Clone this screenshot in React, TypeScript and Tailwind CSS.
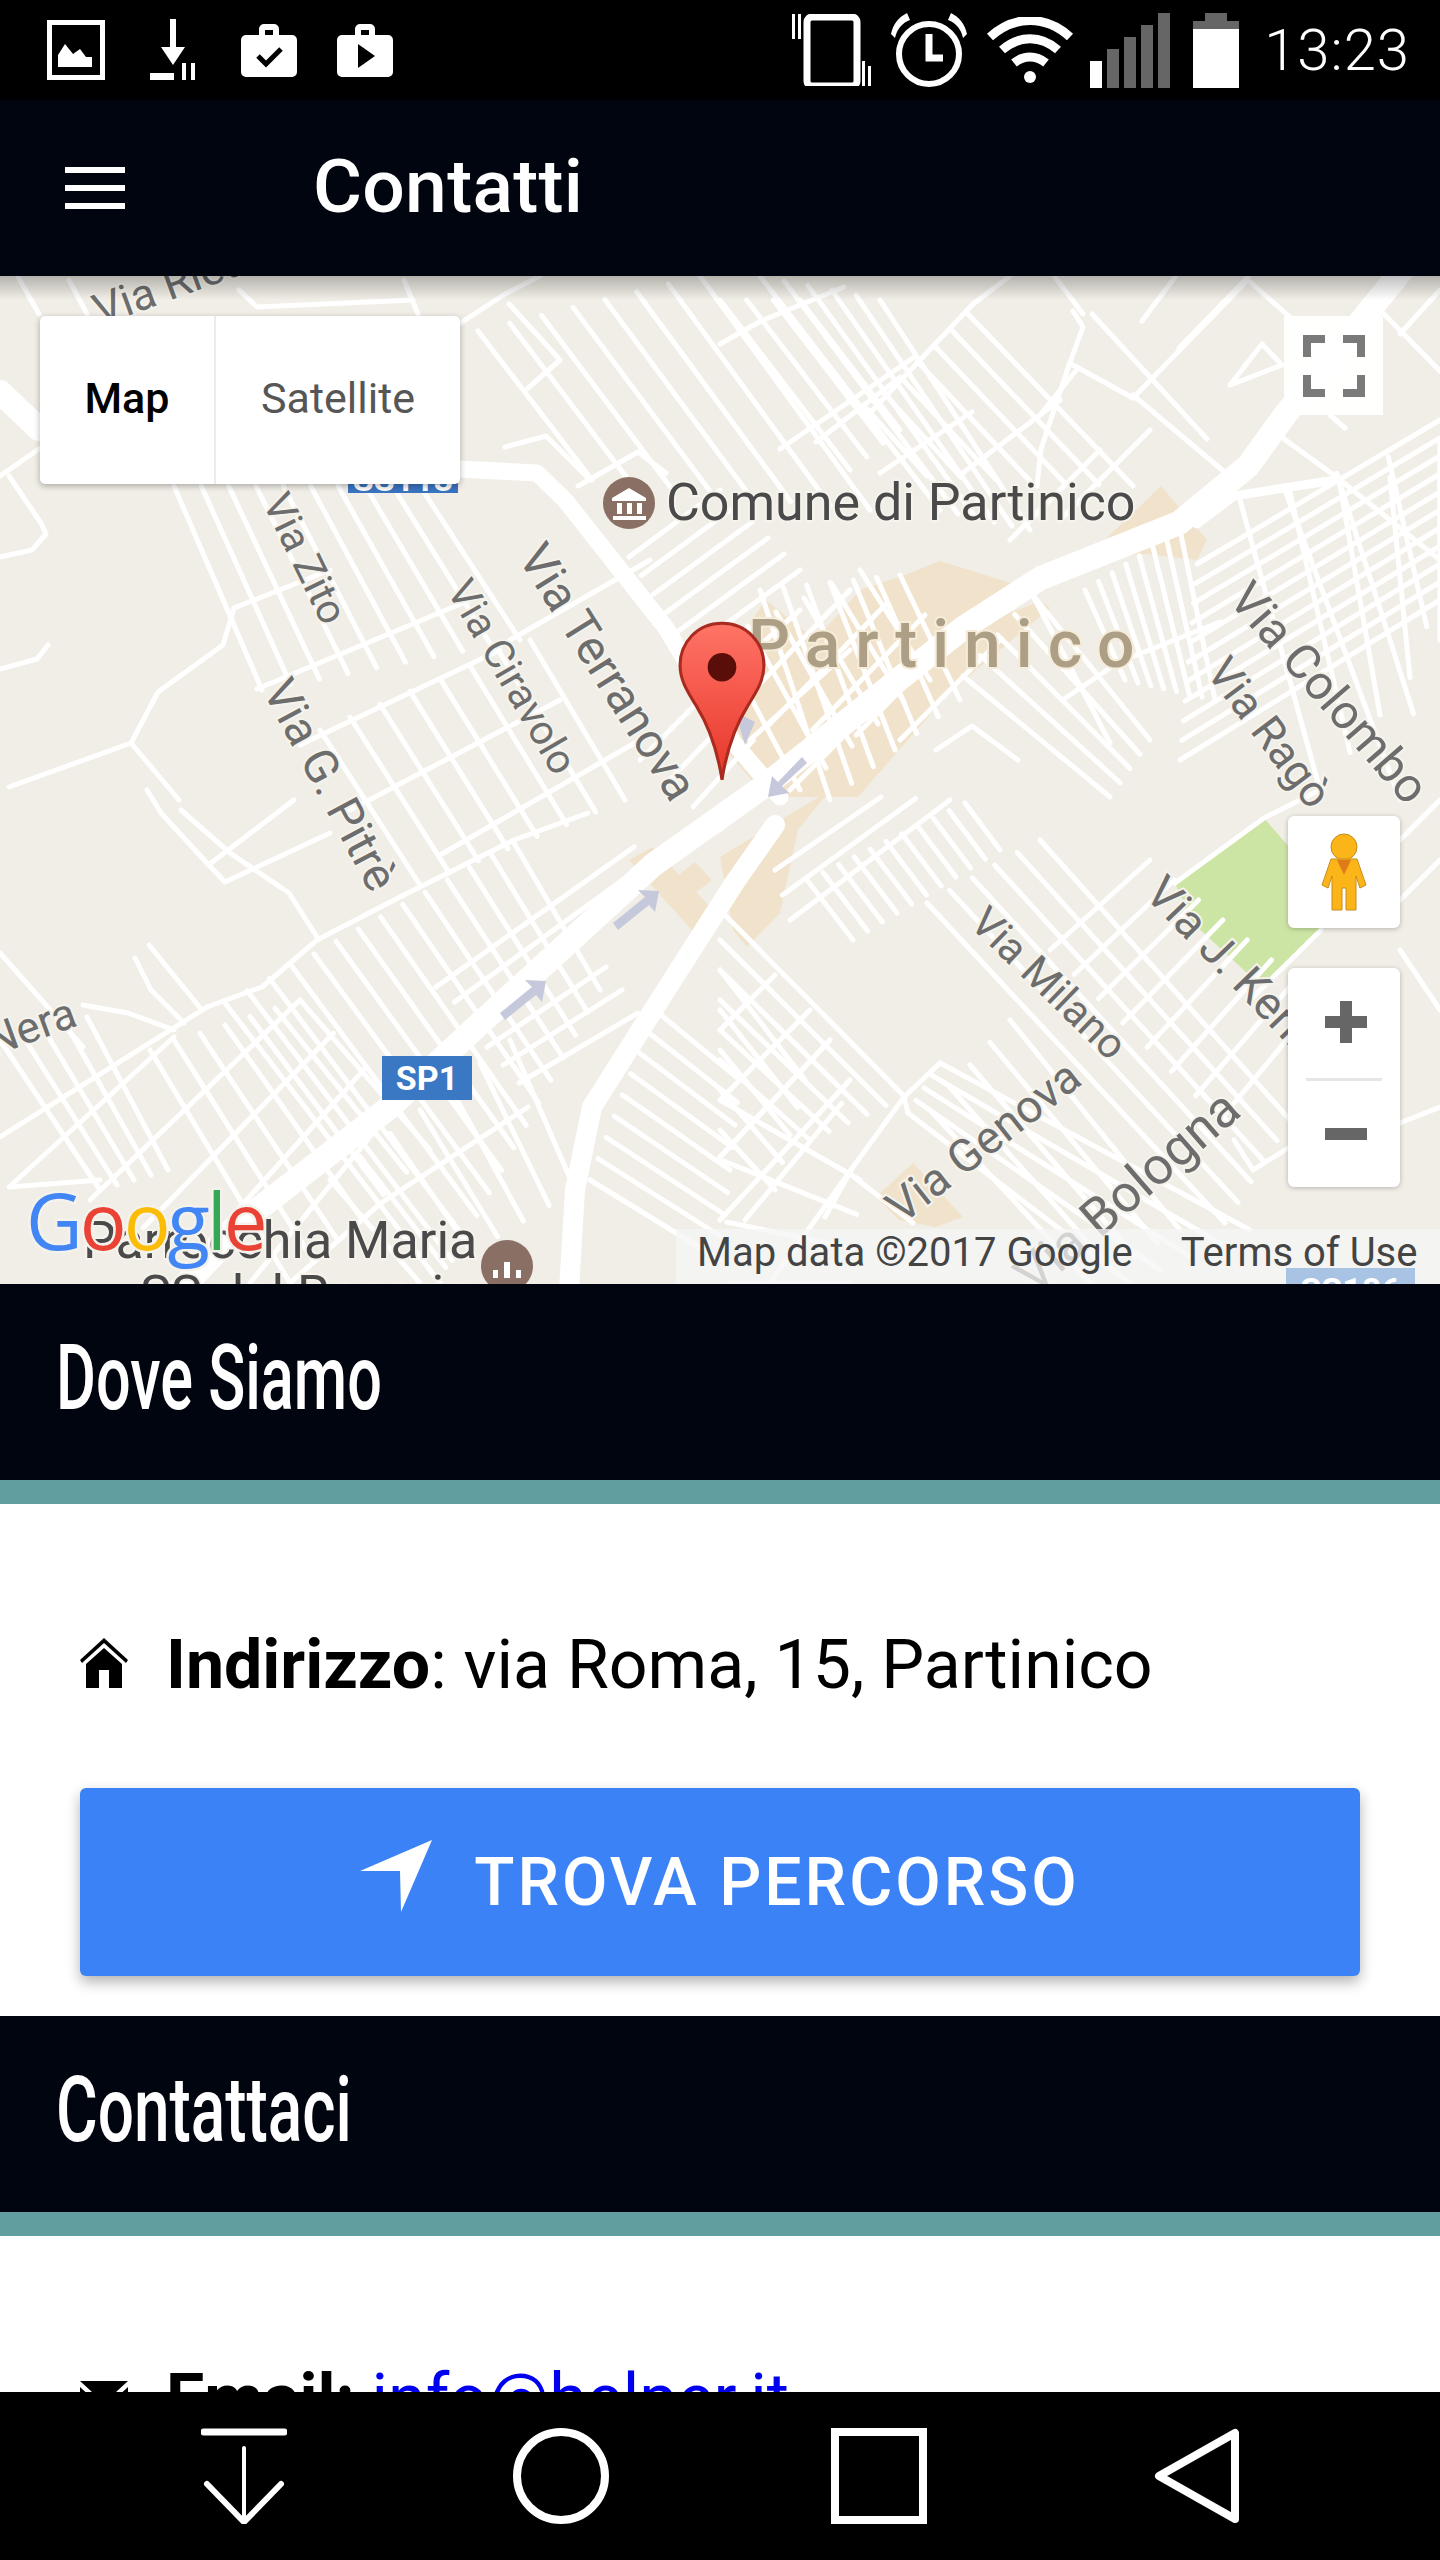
type Pt = [number, number];
type Seg = [number, number, number, number];

// n streets fanned between the edge a-b and the edge c-d
const span = (a: Pt, b: Pt, c: Pt, d: Pt, n: number): Seg[] =>
  Array.from({ length: n }, (_, i) => {
    const t = n === 1 ? 0 : i / (n - 1);
    return [a[0] + (b[0] - a[0]) * t, a[1] + (b[1] - a[1]) * t, c[0] + (d[0] - c[0]) * t, c[1] + (d[1] - c[1]) * t] as Seg;
  });

const blocks: Seg[] = [
  // under the map type control
  ...span([174, 486], [420, 486], [262, 690], [520, 640], 10),
  ...span([320, 730], [530, 640], [420, 885], [625, 800], 8),
  // right of the control
  ...span([478, 331], [700, 276], [592, 480], [870, 510], 8),
  // comune, going up right
  ...span([629, 557], [690, 650], [720, 490], [800, 570], 6),
  ...span([640, 760], [720, 830], [720, 680], [770, 770], 4),
  // top centre
  ...span([720, 300], [800, 300], [850, 470], [900, 430], 4),
  ...span([760, 276], [880, 300], [940, 510], [1030, 530], 6),
  ...span([867, 409], [968, 314], [927, 476], [1133, 486], 7),
  // top right fan
  ...span([1085, 590], [1180, 530], [1125, 680], [1215, 700], 8),
  ...span([1197, 564], [1180, 760], [1440, 420], [1440, 600], 11),
  ...span([1285, 490], [1440, 440], [1400, 800], [1440, 540], 4),
  ...span([1240, 500], [1440, 470], [1320, 790], [1440, 640], 5),
  // partinico grid
  ...span([720, 640], [860, 570], [800, 790], [930, 680], 6),
  ...span([725, 720], [900, 740], [850, 590], [1000, 640], 5),
  ...span([760, 590], [900, 575], [830, 800], [960, 700], 7),
  ...span([963, 676], [1032, 594], [1110, 797], [1150, 740], 5),
  // below the main road, centre
  ...span([807, 880], [965, 803], [853, 940], [1000, 850], 11),
  ...span([775, 870], [790, 920], [881, 797], [950, 800], 3),
  ...span([720, 970], [720, 1130], [805, 1080], [775, 1190], 5),
  ...span([720, 910], [720, 1060], [905, 1097], [810, 1140], 6),
  ...span([927, 903], [1040, 840], [1225, 1223], [1290, 1120], 6),
  ...span([1050, 950], [1220, 1120], [1150, 860], [1320, 1000], 8),
  ...span([908, 1113], [940, 1063], [1130, 1283], [1250, 1230], 5),
  ...span([930, 1110], [1010, 1020], [1090, 1283], [1180, 1230], 5),
  ...span([720, 1157], [770, 1283], [830, 1040], [853, 1167], 3),
  // left of road two
  ...span([655, 1010], [590, 1180], [740, 1080], [720, 1260], 9),
  ...span([720, 1100], [730, 1283], [860, 1180], [850, 1283], 4),
  ...span([487, 1047], [519, 1083], [606, 967], [638, 1013], 3),
  ...span([436, 987], [473, 1017], [634, 847], [615, 910], 3),
  // boundary road down to the main road and past it
  ...span([225, 1003], [514, 843], [440, 1283], [600, 990], 14),
  ...span([150, 1050], [300, 1000], [290, 1283], [430, 1150], 7),
  ...span([90, 1200], [250, 1283], [300, 1000], [400, 1100], 4),
  ...span([330, 1180], [510, 1040], [420, 1283], [575, 1190], 7),
  // bottom left corner
  ...span([0, 1040], [87, 1017], [100, 1190], [168, 1170], 5),
];

const single: number[][] = [
  // thin roads through the empty part
  [234, 608, 223, 645, 158, 692, 131, 743, 9, 787],
  [131, 743, 179, 800],
  [48, 645, 37, 659, 0, 669],
  [39, 449, 0, 476],
  [9, 476, 41, 523, 46, 534, 32, 550, 0, 557],
  [234, 608, 330, 570],
  [257, 689, 470, 600],
  [300, 745, 500, 650],
  [350, 810, 560, 700],
  [440, 855, 640, 740],
  [510, 640, 650, 560],
  [147, 790, 161, 813, 207, 863, 225, 882, 330, 833],
  [181, 810, 230, 853, 289, 893, 317, 937],
  [294, 800, 211, 863],
  [149, 945, 202, 1010],
  [135, 958, 151, 990, 184, 1023],
  [0, 953, 83, 1047],
  [83, 1005, 128, 1013, 174, 1030],
  [207, 1007, 262, 987, 317, 940, 400, 897, 514, 840, 588, 813],
  [207, 1007, 0, 1137],
  [174, 1037, 9, 1187],
  [100, 1180, 10, 1187],
  // above the controls
  [18, 277, 39, 314],
  [69, 280, 87, 314],
  [239, 290, 257, 307, 413, 300],
  [404, 280, 418, 314],
  // round the comune
  [459, 324, 505, 294, 540, 276],
  [528, 388, 560, 360, 509, 304],
  [505, 447, 546, 436, 590, 480],
  [578, 486, 638, 452, 666, 473],
  // top right
  [720, 344, 761, 321, 844, 287],
  [868, 415, 973, 304, 1010, 276],
  [780, 449, 913, 358],
  [816, 442, 899, 378],
  [880, 473, 972, 412],
  [1040, 415, 1078, 368],
  [960, 475, 1060, 400],
  [1010, 540, 1100, 450],
  [1060, 520, 1150, 430],
  [1073, 311, 1083, 327, 1069, 365, 1041, 449, 1037, 486],
  [1133, 398, 1248, 280],
  [1142, 321, 1175, 277],
  [1179, 348, 1248, 277],
  [1092, 314, 1207, 439],
  [1133, 395, 1234, 480],
  [1073, 365, 1133, 398],
  [1055, 277, 1083, 314],
  [1248, 280, 1344, 365],
  [1330, 415, 1345, 428],
  [1262, 344, 1282, 365, 1230, 385, 1262, 344],
  [1381, 311, 1440, 371],
  [1400, 334, 1440, 290],
  [1280, 436, 1335, 476, 1440, 560],
  // centre bits
  [720, 680, 800, 610],
  [750, 740, 850, 650],
  [790, 790, 940, 640],
  [1064, 699, 1119, 662, 1220, 622],
  [936, 750, 972, 726, 1018, 760],
  [1032, 594, 1110, 743],
  [1234, 1140, 1253, 1170, 1317, 1130],
  [904, 1097, 853, 1167, 825, 1217],
  [940, 1063, 904, 1097, 908, 1113],
  [849, 1173, 913, 1223],
  [528, 1107, 381, 1203, 290, 1283],
  [720, 1157, 830, 1040],
  [720, 1100, 810, 1010],
  [720, 1030, 775, 975],
  [720, 1220, 850, 1080],
  // around the park and the zoom control
  [1175, 883, 1264, 818, 1320, 790],
  [1400, 840, 1440, 800],
  [1400, 900, 1440, 860],
  [1400, 950, 1440, 1010],
  [1321, 930, 1250, 1000],
  [1400, 1123, 1440, 1107],
];

const Marker = () => (
  <svg viewBox="0 0 88 160" className="absolute left-[677px] top-[344px] h-[164px] w-[90px]">
    <defs>
      <linearGradient id="pin" x1="0" y1="0" x2="0" y2="1">
        <stop offset="0" stopColor="#ff7466" />
        <stop offset="1" stopColor="#e8352a" />
      </linearGradient>
    </defs>
    <path d="M44 3C20 3 3 22 3 44c0 14 6 24 16 40 10 16 20 40 25 72 5-32 15-56 25-72 10-16 16-26 16-40C85 22 68 3 44 3Z" fill="url(#pin)" stroke="#a92b20" strokeWidth="3" />
    <circle cx="44" cy="46" r="14" fill="#5a0e0a" />
  </svg>
);

const MapLabel = ({ x, y, r = 0, children, size = 44 }: { x: number; y: number; r?: number; children: string; size?: number }) => (
  <text
    x={x}
    y={y}
    fontSize={size}
    transform={`rotate(${r} ${x} ${y})`}
    fill="#6d6d6d"
    stroke="#f5f3ec"
    strokeWidth="4"
    paintOrder="stroke"
  >
    {children}
  </text>
);

const GoogleMap = () => (
  <div className="relative h-[1008px] overflow-hidden bg-[#f0eee6]">
    <svg viewBox="0 276 1440 1008" className="h-full w-full">
      <g fill="#f1e3cb">
        <polygon points="730,650 766,600 815,640 860,590 905,575 940,561 1014,584 977,625 1041,601 1050,608 950,692 858,797 766,797 720,743" />
        <polygon points="1087,557 1161,486 1207,540 1197,560 1147,554" />
        <polygon points="720,857 830,790 798,830 780,913 747,947 733,930" />
        <polygon points="629,860 652,847 716,913 698,937" />
        <polygon points="666,885 695,862 712,880 680,905" />
        <polygon points="876,1197 913,1163 963,1217 936,1227 899,1220" />
      </g>
      <polygon points="1175,883 1264,818 1289,847 1321,930 1262,987 1193,923" fill="#cde5a4" />
      <g stroke="#ffffff" strokeWidth="5" fill="none" strokeLinecap="round" strokeLinejoin="round">
        {blocks.map((s, i) => (
          <line key={i} x1={s[0]} y1={s[1]} x2={s[2]} y2={s[3]} />
        ))}
        {single.map((p, i) => (
          <polyline key={i} points={p.join(" ")} />
        ))}
      </g>
      <g stroke="#ffffff" fill="none" strokeLinecap="round" strokeLinejoin="round">
        <polyline strokeWidth="24" points="180,1290 257,1210 390,1107 474,1029 653,865 767,784 848,720 963,628 1041,578 1179,523 1248,466 1285,415 1386,290 1410,260" />
        <polyline strokeWidth="20" points="569,1290 575,1190 592,1107 666,990 735,882 775,825" />
        <polyline strokeWidth="17" points="459,469 537,473 565,500 666,628 734,743 780,797" />
        <polyline strokeWidth="24" points="0,392 39,429" />
        <polyline strokeWidth="9" points="1197,524 1234,496 1335,480" />
      </g>
      <g fill="#c6c9dc">
        <polygon points="500,1013 532,987 525,980 546,981 542,1002 536,995 505,1020" />
        <polygon points="613,923 645,897 638,890 659,891 655,912 649,905 618,930" />
        <polygon points="807,763 782,786 789,793 768,797 772,776 778,782 802,757" />
        <polygon points="735,712 755,722 745,745" />
      </g>

      <MapLabel x={100} y={326} r={-20}>Via Rieti</MapLabel>
      <MapLabel x={262} y={502} r={64} size={41}>Via Zito</MapLabel>
      <MapLabel x={262} y={690} r={62} size={47}>Via G. Pitrè</MapLabel>
      <MapLabel x={446} y={590} r={60} size={41}>Via Ciravolo</MapLabel>
      <MapLabel x={517} y={557} r={58} size={48}>Via Terranova</MapLabel>
      <MapLabel x={-77} y={1082} r={-20}>Via Nera</MapLabel>
      <MapLabel x={1227} y={600} r={49} size={48}>Via Colombo</MapLabel>
      <MapLabel x={1205} y={672} r={53} size={44}>Via Ragò</MapLabel>
      <MapLabel x={1143} y={895} r={46} size={46}>Via J. Kennedy</MapLabel>
      <MapLabel x={968} y={925} r={44} size={42}>Via Milano</MapLabel>
      <MapLabel x={902} y={1225} r={-38} size={46}>Via Genova</MapLabel>
      <MapLabel x={1034} y={1296} r={-41} size={52}>Via Bologna</MapLabel>

      <text x={666} y={520} fontSize="52" fill="#4a4a4a" stroke="#f5f3ec" strokeWidth="4" paintOrder="stroke">Comune di Partinico</text>
      <circle cx={629} cy={503} r={26} fill="#8a6f64" />
      <path d="M612 498l17-10 17 10v3h-34zM617 503h5v11h-5zM627 503h5v11h-5zM637 503h5v11h-5zM613 516h33v4h-33z" fill="#fff" />

      <text x={748} y={667} fontSize="66" fontWeight="500" letterSpacing="15" fill="#ad9f85" stroke="#f5ecd9" strokeWidth="4" paintOrder="stroke">Partinico</text>

      <rect x={348} y={470} width={110} height={23} fill="#3a74c0" />
      <text x={403} y={491} fontSize="34" fontWeight="700" fill="#fff" textAnchor="middle">SS113</text>
      <rect x={382} y={1056} width={90} height={44} fill="#3b78c4" />
      <text x={427} y={1090} fontSize="34" fontWeight="700" fill="#fff" textAnchor="middle">SP1</text>

      <text x={83} y={1258} fontSize="52" fill="#4a4a4a" stroke="#f5f3ec" strokeWidth="4" paintOrder="stroke">Parrocchia Maria</text>
      <text x={140} y={1312} fontSize="52" fill="#4a4a4a" stroke="#f5f3ec" strokeWidth="4" paintOrder="stroke">SS del Rosario</text>
      <circle cx={507} cy={1266} r={26} fill="#8a6f64" />
      <path d="M504 1262h6v16h-6zM493 1270h5v8h-5zM516 1270h5v8h-5z" fill="#fff" />

      {/* logo as coloured letters */}
      <text x={26} y={1250} fontSize="78" fontWeight="500" letterSpacing="-3" stroke="#f4f2ec" strokeWidth="5" paintOrder="stroke" fontFamily="'Open Sans',sans-serif">
        <tspan fill="#4285f4">G</tspan>
        <tspan fill="#ea4335">o</tspan>
        <tspan fill="#fbbc05">o</tspan>
        <tspan fill="#4285f4">g</tspan>
        <tspan fill="#34a853">l</tspan>
        <tspan fill="#ea4335">e</tspan>
      </text>
    </svg>

    <div className="absolute inset-x-0 top-0 h-6 bg-gradient-to-b from-black/25 to-transparent" />

    <Marker />

    {/* map type */}
    <div className="absolute left-10 top-10 flex h-[168px] w-[420px] rounded-[5px] bg-white text-[43px] shadow-[0_2px_6px_rgba(0,0,0,0.3)]">
      <div className="flex w-[176px] items-center justify-center border-r-2 border-[#ececec] pb-1 font-medium text-black">Map</div>
      <div className="flex flex-1 items-center justify-center pb-1 text-[#565656]">Satellite</div>
    </div>

    {/* fullscreen */}
    <div className="absolute left-[1284px] top-10 flex size-[99px] items-center justify-center bg-white/95">
      <svg viewBox="0 0 62 62" className="size-[62px]" fill="none" stroke="#7a7a7a" strokeWidth="8">
        <path d="M4 22V4h18M40 4h18v18M4 40v18h18M58 40v18H40" />
      </svg>
    </div>

    {/* pegman */}
    <div className="absolute left-[1288px] top-[540px] flex h-[112px] w-[112px] items-center justify-center rounded-[6px] bg-white shadow-[0_1px_5px_rgba(0,0,0,0.25)]">
      <svg viewBox="0 0 46 78" className="h-[78px] w-[46px]">
        <circle cx="23" cy="14" r="13" fill="#fbb519" stroke="#c98a1a" strokeWidth="1" />
        <path d="M10 26h26l9 26-6 3-4-12v34H25V55h-4v22H11V43L7 55l-6-3Z" fill="#fbb519" stroke="#c98a1a" strokeWidth="1" />
        <path d="M16 27h14l-7 15Z" fill="#e07b1a" />
      </svg>
    </div>

    {/* zoom */}
    <div className="absolute left-[1288px] top-[692px] flex h-[219px] w-[112px] flex-col items-center rounded-[6px] bg-white shadow-[0_1px_5px_rgba(0,0,0,0.25)]">
      <div className="relative h-[110px] w-full">
        <div className="absolute left-[37px] top-[48px] h-[12px] w-[42px] bg-[#666]" />
        <div className="absolute left-[52px] top-[33px] h-[42px] w-[12px] bg-[#666]" />
      </div>
      <div className="h-[3px] w-[76px] bg-[#e6e6e6]" />
      <div className="relative w-full flex-1">
        <div className="absolute left-[37px] top-[47px] h-[12px] w-[42px] bg-[#666]" />
      </div>
    </div>

    {/* attribution */}
    <div className="absolute bottom-0 right-0 flex h-[55px] w-[764px] items-center bg-[#f5f5f5]/75 pb-2 text-[40px] text-[#444]">
      <span className="ml-[21px]">Map data ©2017 Google</span>
      <span className="ml-[48px]">Terms of Use</span>
    </div>
    <div className="absolute bottom-0 left-[1286px] h-4 w-[129px] overflow-hidden bg-[#a9c3e4] text-center text-[34px] font-bold leading-[44px] text-white">SS186</div>
  </div>
);

const SectionTitle = ({ children, squeeze }: { children: string; squeeze: string }) => (
  <div className="border-b-[24px] border-[#619e9f] bg-[#00050f]">
    <div className="flex h-[196px] items-center pb-2 pl-[56px]">
      <h2 className={`origin-left whitespace-nowrap text-[90px] font-medium text-white ${squeeze}`}>{children}</h2>
    </div>
  </div>
);

const StatusIcons = () => (
  <div className="flex h-[100px] items-center bg-black pl-[47px] pr-[30px]">
    <svg viewBox="0 0 58 60" className="h-[60px] w-[58px]">
      <rect x="2.5" y="2.5" width="53" height="55" fill="none" stroke="#fff" strokeWidth="5" />
      <path d="M8 50V38l7-11 8 10 7-5 6 8h6v10Z" transform="translate(3 -3)" fill="#fff" />
    </svg>
    <svg viewBox="0 0 46 62" className="ml-[45px] h-[62px] w-[46px]" fill="#fff">
      <path d="M20 0h6v28h9L23 46 11 28h9Z" />
      <rect x="0" y="54" width="24" height="7" />
      <rect x="32" y="44" width="4" height="17" />
      <rect x="41" y="44" width="4" height="17" />
    </svg>
    <svg viewBox="0 0 56 54" className="ml-[45px] h-[54px] w-[56px]">
      <path d="M18 12V6a5 5 0 0 1 5-5h10a5 5 0 0 1 5 5v6h13a5 5 0 0 1 5 5v32a5 5 0 0 1-5 5H5a5 5 0 0 1-5-5V17a5 5 0 0 1 5-5ZM24 12h8V7h-8Z" fill="#fff" fillRule="evenodd" />
      <path d="M17 33l8 8 15-15" fill="none" stroke="#000" strokeWidth="5" />
    </svg>
    <svg viewBox="0 0 56 54" className="ml-10 h-[54px] w-[56px]">
      <path d="M18 12V6a5 5 0 0 1 5-5h10a5 5 0 0 1 5 5v6h13a5 5 0 0 1 5 5v32a5 5 0 0 1-5 5H5a5 5 0 0 1-5-5V17a5 5 0 0 1 5-5ZM24 12h8V7h-8Z" fill="#fff" fillRule="evenodd" />
      <path d="M21 21l17 12-17 12Z" fill="#000" />
    </svg>

    <div className="ml-auto flex items-center">
      <svg viewBox="0 0 80 72" className="h-[72px] w-[80px]">
        <rect x="16" y="3" width="50" height="69" rx="5" fill="none" stroke="#fff" strokeWidth="7" />
        <path d="M1 0h3v25H1ZM7 0h3v25H7ZM71 47h3v25h-3ZM77 52h3v20h-3Z" fill="#fff" />
      </svg>
      <svg viewBox="0 0 84 76" className="ml-4 h-[76px] w-[84px]" fill="none" stroke="#fff">
        <circle cx="42" cy="42" r="30" strokeWidth="6" />
        <path d="M42 22v24h14" strokeWidth="7" />
        <path d="M4 22C6 12 12 5 20 1l3 7C15 11 10 17 8 26ZM80 22C78 12 72 5 64 1l-3 7c8 3 13 9 15 18Z" fill="#fff" stroke="none" />
      </svg>
      <svg viewBox="0 0 88 67" className="ml-[15px] h-[67px] w-[88px]" fill="none" stroke="#fff" strokeWidth="9">
        <path d="M4 20c24-22 56-22 80 0M16 33c17-15 39-15 56 0M28 46c10-8 22-8 32 0" />
        <circle cx="44" cy="60" r="6" fill="#fff" stroke="none" />
      </svg>
      <div className="ml-4 flex h-[75px] items-end gap-[5px]">
        <div className="h-[27px] w-3 bg-white" />
        <div className="h-[39px] w-3 bg-[#666]" />
        <div className="h-[51px] w-3 bg-[#666]" />
        <div className="h-[63px] w-3 bg-[#666]" />
        <div className="h-[75px] w-3 bg-[#666]" />
      </div>
      <div className="ml-[23px] flex h-[75px] w-[46px] flex-col items-center">
        <div className="h-2 w-[22px] bg-[#666]" />
        <div className="h-2 w-full bg-[#666]" />
        <div className="w-full flex-1 bg-white" />
      </div>
      <span className="ml-[25px] text-[58px] font-light leading-none tracking-[1px] text-white">13:23</span>
    </div>
  </div>
);

const NavBar = () => (
  <div className="flex h-[168px] items-start bg-black pl-[201px] pt-9 text-white">
    <svg viewBox="0 0 86 96" className="h-[96px] w-[86px]" fill="none" stroke="#fff" strokeLinecap="round">
      <path d="M3 4h80" strokeWidth="7" />
      <path d="M43 20v72" strokeWidth="4" />
      <path d="M6 56l37 38 37-38" strokeWidth="6" />
    </svg>
    <svg viewBox="0 0 96 96" className="ml-[226px] size-24" fill="none" stroke="#fff" strokeWidth="8">
      <circle cx="48" cy="48" r="44" />
    </svg>
    <svg viewBox="0 0 96 96" className="ml-[222px] size-24" fill="none" stroke="#fff" strokeWidth="8">
      <rect x="4" y="4" width="88" height="88" />
    </svg>
    <svg viewBox="0 0 86 96" className="ml-[227px] h-[96px] w-[86px]" fill="none" stroke="#fff" strokeWidth="8" strokeLinejoin="round">
      <path d="M81 5v86L5 48Z" />
    </svg>
  </div>
);

export default function App() {
  return (
    <div className="flex h-[2560px] w-[1440px] flex-col overflow-hidden bg-white [font-family:Roboto,sans-serif]">
      <StatusIcons />
      <header className="flex h-[176px] items-center bg-[#00050f] pl-[65px] text-white">
        <div className="flex w-[60px] flex-col gap-3">
          <div className="h-1.5 bg-white" />
          <div className="h-1.5 bg-white" />
          <div className="h-1.5 bg-white" />
        </div>
        <h1 className="ml-[188px] pb-1 text-[75px] font-medium leading-none tracking-[0.3px]">Contatti</h1>
      </header>

      <div className="min-h-0 flex-1 overflow-hidden">
        <GoogleMap />
        <SectionTitle squeeze="scale-x-[0.68]">Dove Siamo</SectionTitle>

        <div className="px-20 pb-10 pt-[127px]">
          <p className="flex items-center text-[68px] leading-none text-black">
            <svg viewBox="0 0 48 50" className="mb-1 mr-[38px] h-[50px] w-[48px] shrink-0">
              <path d="M24 0 0 22l2 3L24 5l22 20 2-3ZM24 10 6 26v24h13V32h10v18h13V26Z" fill="#000" />
            </svg>
            <span><b className="font-bold">Indirizzo</b>: via Roma, 15, Partinico</span>
          </p>
          <button className="mt-[89px] flex h-[188px] w-full items-center justify-center rounded-md bg-[#3b82f6] text-[66px] font-medium tracking-[3px] text-white shadow-[0_6px_14px_rgba(0,0,0,0.3)]">
            <svg viewBox="0 0 72 72" className="mb-3 mr-[42px] size-[72px]">
              <path d="M72 0 0 31h40l1 41Z" fill="#fff" />
            </svg>
            TROVA PERCORSO
          </button>
        </div>

        <SectionTitle squeeze="scale-x-[0.71]">Contattaci</SectionTitle>

        <div className="px-20 pt-[129px]">
          <p className="flex items-center text-[68px] leading-none text-black">
            <svg viewBox="0 0 48 36" className="mr-[38px] h-9 w-12 shrink-0">
              <path d="M0 0h48L24 22ZM0 6v30h48V6L24 28Z" fill="#000" />
            </svg>
            <span><b className="font-bold">Email:</b> <a className="text-[#0000ee]">info@helper.it</a></span>
          </p>
        </div>
      </div>

      <NavBar />
    </div>
  );
}
